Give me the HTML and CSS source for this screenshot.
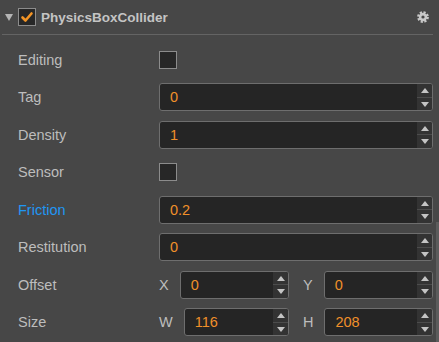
FILE: index.html
```html
<!DOCTYPE html>
<html lang="en">
<head>
  <meta charset="UTF-8">
  <title>PhysicsBoxCollider</title>
  <link rel="stylesheet" href="styles.css">
</head>
<body>
  <div class="panel">
    <div class="header">
      <span class="fold"></span>
      <span class="check on">
        <svg width="14" height="14" viewBox="0 0 14 14"><path d="M2.5 7.5 L5.5 10.5 L11.5 3.5" fill="none" stroke="#f39425" stroke-width="2.6" stroke-linecap="round" stroke-linejoin="round"/></svg>
      </span>
      <span class="title">PhysicsBoxCollider</span>
      <svg class="gear" width="12" height="12" viewBox="0 0 12 12">
        <circle cx="6" cy="6" r="4.2" fill="#c8c8c8"/>
        <circle cx="6" cy="6" r="4.6" fill="none" stroke="#c8c8c8" stroke-width="2.6" stroke-dasharray="2.1 1.5"/>
        <circle cx="6" cy="6" r="1.6" fill="#474747"/>
      </svg>
    </div>

    <div class="rows">
      <div class="row">
        <div class="label">Editing</div>
        <div class="field"><span class="check"></span></div>
      </div>
      <div class="row">
        <div class="label">Tag</div>
        <div class="field">
          <div class="num"><span class="val">0</span><span class="spin"><i class="up"></i><i class="down"></i></span></div>
        </div>
      </div>
      <div class="row">
        <div class="label">Density</div>
        <div class="field">
          <div class="num"><span class="val">1</span><span class="spin"><i class="up"></i><i class="down"></i></span></div>
        </div>
      </div>
      <div class="row">
        <div class="label">Sensor</div>
        <div class="field"><span class="check"></span></div>
      </div>
      <div class="row">
        <div class="label active">Friction</div>
        <div class="field">
          <div class="num"><span class="val">0.2</span><span class="spin"><i class="up"></i><i class="down"></i></span></div>
        </div>
      </div>
      <div class="row">
        <div class="label">Restitution</div>
        <div class="field">
          <div class="num"><span class="val">0</span><span class="spin"><i class="up"></i><i class="down"></i></span></div>
        </div>
      </div>
      <div class="row">
        <div class="label">Offset</div>
        <div class="field pair">
          <div class="part">
            <span class="axis">X</span>
            <div class="num"><span class="val">0</span><span class="spin"><i class="up"></i><i class="down"></i></span></div>
          </div>
          <div class="part">
            <span class="axis">Y</span>
            <div class="num"><span class="val">0</span><span class="spin"><i class="up"></i><i class="down"></i></span></div>
          </div>
        </div>
      </div>
      <div class="row">
        <div class="label">Size</div>
        <div class="field pair">
          <div class="part">
            <span class="axis">W</span>
            <div class="num"><span class="val">116</span><span class="spin"><i class="up"></i><i class="down"></i></span></div>
          </div>
          <div class="part">
            <span class="axis">H</span>
            <div class="num"><span class="val">208</span><span class="spin"><i class="up"></i><i class="down"></i></span></div>
          </div>
        </div>
      </div>
    </div>
    <div class="scrollbar"></div>
  </div>
</body>
</html>
```

FILE: styles.css
```css
html, body {
  margin: 0;
  background-color: #474747;
}

body {
  font-family: "Liberation Sans", Arial, sans-serif;
  color: #bdbdbd;
  width: 439px;
  height: 342px;
  overflow: hidden;
}

.panel {
  position: relative;
  height: 342px;
}

.header {
  display: flex;
  align-items: center;
  height: 34px;
  margin: 0 6px 0 2px;
  padding-left: 3px;
  border-bottom: 1px solid #646464;
}

.fold {
  width: 0;
  height: 0;
  border-left: 4px solid transparent;
  border-right: 4px solid transparent;
  border-top: 7px solid #b4b4b4;
  margin-right: 5px;
}

.check {
  display: inline-flex;
  align-items: center;
  justify-content: center;
  box-sizing: border-box;
  width: 18px;
  height: 18px;
  border: 1px solid #8c8c8c;
  background-color: #272727;
}

.title {
  margin-left: 5px;
  font-size: 13.5px;
  font-weight: bold;
  color: #c4c4c4;
}

.gear {
  margin-left: auto;
  margin-right: 4px;
}

.rows {
  padding-top: 6px;
}

.row {
  display: flex;
  align-items: center;
  height: 37.5px;
  padding-left: 18px;
  padding-right: 6px;
}

.label {
  width: 141px;
  font-size: 14.5px;
}

.label.active {
  color: #2196f3;
}

.field {
  flex: 1;
  display: flex;
  align-items: center;
}

.num {
  flex: 1;
  display: flex;
  box-sizing: border-box;
  height: 28px;
  border: 1px solid #6e6e6e;
  border-radius: 3px;
  background-color: #252525;
  overflow: hidden;
}

.val {
  flex: 1;
  display: flex;
  align-items: center;
  padding-left: 10px;
  font-size: 14.5px;
  color: #f0902a;
}

.spin {
  display: flex;
  flex-direction: column;
  width: 15px;
  background-color: #333333;
}

.spin i {
  flex: 1;
  display: flex;
  align-items: center;
  justify-content: center;
}

.spin .up {
  border-bottom: 1px solid #4c4c4c;
}

.spin .up::after {
  content: "";
  border-left: 4px solid transparent;
  border-right: 4px solid transparent;
  border-bottom: 5px solid #c4c4c4;
}

.spin .down::after {
  content: "";
  border-left: 4px solid transparent;
  border-right: 4px solid transparent;
  border-top: 5px solid #c4c4c4;
}

.pair {
  display: grid;
  grid-template-columns: 1fr 1fr;
  column-gap: 14px;
}

.part {
  display: flex;
  align-items: center;
}

.axis {
  font-size: 14.5px;
  margin-right: 11px;
}

.scrollbar {
  position: absolute;
  right: 0;
  top: 222px;
  bottom: 0;
  width: 3px;
  background-color: #5c5c5c;
}
```
